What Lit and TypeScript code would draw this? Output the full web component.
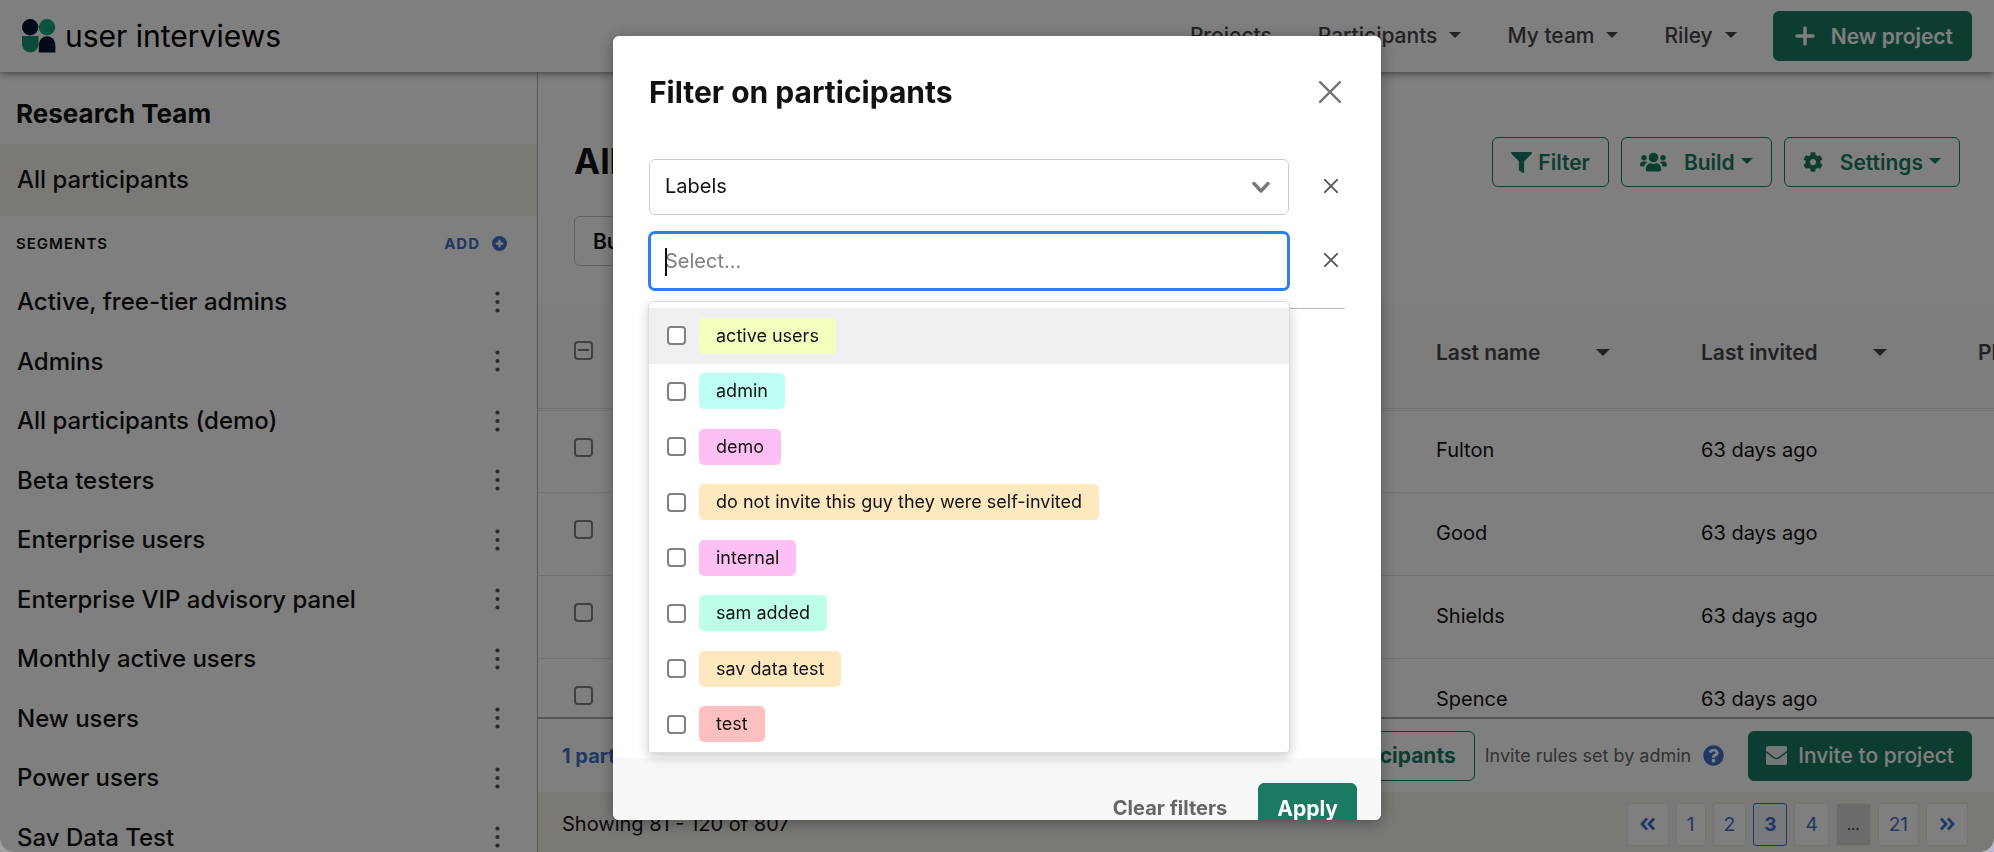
import { LitElement, html, svg, css } from "lit";
import { customElement, property, state } from "lit/decorators.js";
import { classMap } from "lit/directives/class-map.js";

const reset = css`
  *, *::before, *::after { box-sizing: border-box; }
  button, input, select { font: inherit; color: inherit; margin: 0; }
  button { background: none; border: 0; padding: 0; cursor: pointer; }
  a { color: inherit; text-decoration: none; }
  h1, h2, p, ul { margin: 0; padding: 0; }
  ul { list-style: none; }
  svg { display: block; flex: none; }
  .check {
    appearance: none;
    display: block;
    width: 19px;
    height: 19px;
    border: 2px solid #808080;
    border-radius: 4px;
    background: #fff;
  }
  .btn {
    display: flex;
    align-items: center;
    height: 50px;
    border: 1px solid var(--green);
    border-radius: 6px;
    color: var(--green);
    font-weight: 600;
    white-space: nowrap;
  }
  .btn.solid { background: var(--green); color: #fff; }
`;

const caret = (w = 12) => svg`<svg width=${w} height=${w / 2} viewBox="0 0 12 6" fill="currentColor"><path d="M0 0h12L6 6z"/></svg>`;
const cross = (s: number, w: number) => svg`<svg width=${s} height=${s} viewBox="0 0 20 20" fill="none" stroke="currentColor" stroke-width=${w} stroke-linecap="round"><path d="M1 1l18 18M19 1L1 19"/></svg>`;
const plus = svg`<svg width="20" height="20" viewBox="0 0 20 20" fill="none" stroke="currentColor" stroke-width="3.4" stroke-linecap="round"><path d="M10 2v16M2 10h16"/></svg>`;
const plusCircle = svg`<svg width="15" height="15" viewBox="0 0 16 16"><circle cx="8" cy="8" r="8" fill="currentColor"/><path d="M8 4v8M4 8h8" stroke="#fff" stroke-width="2.4"/></svg>`;
const funnel = svg`<svg width="21" height="21" viewBox="0 0 512 512" fill="currentColor"><path d="M488 0H24C3 0-8 26 7 41l185 185v206c0 8 4 15 10 20l80 56c16 11 38 0 38-20V226L505 41c15-15 4-41-17-41z"/></svg>`;
const people = svg`<svg width="27" height="21" viewBox="0 0 27 21" fill="currentColor"><circle cx="13.500" cy="5.500" r="4.800"/><circle cx="4" cy="5.800" r="2.700"/><circle cx="23" cy="5.800" r="2.700"/><path d="M5.800 17.500c0-4 2-6.300 5-6.300 1 .5 1.800.7 2.700.7s1.700-.2 2.700-.7c3 0 5 2.300 5 6.300 0 1.300-.8 2-2 2H7.800c-1.200 0-2-.7-2-2zM0 13.200C0 11 1.200 9.500 3 9.500h2.300c.9 0 1.500.3 2 .8-1.700 1-2.700 2.400-3 4.200H1.200c-.8 0-1.200-.4-1.200-1.300zM27 13.200c0-2.200-1.200-3.700-3-3.700h-2.300c-.9 0-1.500.3-2 .8 1.700 1 2.700 2.400 3 4.200h3.100c.8 0 1.200-.4 1.200-1.300z"/></svg>`;
const gear = svg`<svg width="20" height="20" viewBox="0 0 512 512" fill="currentColor"><path d="M487.400 315.700l-42.600-24.600c4.300-23.200 4.300-47 0-70.200l42.600-24.600c4.900-2.800 7.100-8.600 5.500-14-11.100-35.600-30-67.800-54.700-94.600-3.800-4.100-10-5.100-14.800-2.300L380.800 110c-17.900-15.400-38.500-27.300-60.800-35.100V25.800c0-5.600-3.900-10.500-9.400-11.700-36.700-8.200-74.300-7.800-109.200 0-5.500 1.200-9.400 6.100-9.400 11.700V75c-22.200 7.900-42.800 19.800-60.800 35.100L88.700 85.500c-4.900-2.800-11-1.900-14.800 2.300-24.700 26.700-43.600 58.900-54.700 94.600-1.700 5.400.6 11.200 5.500 14L67.300 221c-4.300 23.200-4.300 47 0 70.200l-42.600 24.600c-4.900 2.800-7.100 8.600-5.500 14 11.100 35.600 30 67.800 54.700 94.600 3.800 4.100 10 5.100 14.800 2.300l42.600-24.600c17.900 15.400 38.500 27.300 60.800 35.100v49.200c0 5.600 3.900 10.500 9.400 11.700 36.700 8.200 74.300 7.800 109.200 0 5.500-1.200 9.400-6.100 9.400-11.700v-49.200c22.200-7.900 42.800-19.800 60.800-35.100l42.600 24.600c4.900 2.800 11 1.900 14.800-2.300 24.700-26.700 43.600-58.900 54.700-94.600 1.500-5.500-.7-11.300-5.600-14.100zM256 336c-44.100 0-80-35.900-80-80s35.900-80 80-80 80 35.900 80 80-35.900 80-80 80z"/></svg>`;
const envelope = svg`<svg width="21" height="19" viewBox="0 0 21 19"><rect width="21" height="19" rx="2" fill="currentColor" opacity="0.900"/><path d="M0 5.500c3.500 3 6 4.800 8 6.200 1.800 1.200 3.200 1.200 5 0 2-1.400 4.500-3.200 8-6.200" fill="none" stroke="#1a7a62" stroke-width="1.500"/></svg>`;
const help = svg`<svg width="21" height="21" viewBox="0 0 512 512" fill="currentColor"><path d="M504 256c0 137-111 248-248 248S8 393 8 256 119 8 256 8s248 111 248 248zM262.700 90c-54.500 0-89.300 23-116.500 63.800-3.500 5.300-2.400 12.400 2.700 16.300l34.700 26.300c5.200 3.900 12.600 3 16.700-2.100 17.900-22.700 30.100-35.800 57.300-35.800 20.400 0 45.700 13.100 45.700 33 0 15-12.400 22.700-32.500 34C247.100 238.500 216 254.900 216 296v4c0 6.600 5.400 12 12 12h56c6.600 0 12-5.400 12-12v-1.300c0-28.500 83.200-29.600 83.200-106.700 0-58-60.200-102-116.500-102zM256 338c-25.400 0-46 20.600-46 46s20.600 46 46 46 46-20.600 46-46-20.600-46-46-46z"/></svg>`;
const dots = svg`<svg width="5" height="22" viewBox="0 0 5 22" fill="#555"><circle cx="2.500" cy="2.500" r="2.100"/><circle cx="2.500" cy="11" r="2.100"/><circle cx="2.500" cy="19.500" r="2.100"/></svg>`;
const logo = svg`<svg width="34" height="34" viewBox="0 0 34 34"><circle cx="8.200" cy="8.200" r="8.200" fill="#04122f"/><circle cx="25" cy="8.200" r="8.200" fill="#16a67c"/><path d="M0 17h16.500v8.200a8.250 8.250 0 0 1-16.500 0z" fill="#149570"/><path d="M16.800 33.500v-8a8.300 8.300 0 0 1 16.600 0v8z" fill="#04122f"/></svg>`;
const angles = (flip: boolean) => svg`<svg width="16" height="14" viewBox="0 0 16 14" fill="none" stroke="currentColor" stroke-width="2.800"><path d=${flip ? "M2 1.500L7 7l-5 5.500M9 1.500L14 7l-5 5.500" : "M7 1.500L2 7l5 5.500M14 1.500L9 7l5 5.500"}/></svg>`;

@customElement("site-header")
class SiteHeader extends LitElement {
  static styles = [reset, css`
    :host {
      display: flex;
      align-items: center;
      height: 72px;
      padding: 0 22px;
      position: relative;
      z-index: 1;
      background: #fff;
      box-shadow: 0 1px 8px rgba(0, 0, 0, 0.55);
    }
    .brand { display: flex; align-items: center; gap: 9px; font-size: 30px; color: #000; }
    nav { display: flex; align-items: center; gap: 46px; margin-left: auto; padding-bottom: 2px; color: #444; font-size: 21px; font-weight: 500; }
    nav a { display: flex; align-items: center; gap: 12px; }
    .btn { gap: 16px; padding: 0 18px 0 21px; margin-left: 36px; font-size: 21px; }
  `];
  render() {
    return html`
      <a class="brand" href="#">${logo}<span>user interviews</span></a>
      <nav>
        <a href="#">Projects</a>
        ${["Participants", "My team", "Riley"].map((t) => html`<a href="#">${t}${caret()}</a>`)}
      </nav>
      <button class="btn solid">${plus}New project</button>
    `;
  }
}

@customElement("segment-sidebar")
class SegmentSidebar extends LitElement {
  static styles = [reset, css`
    :host { display: block; border-right: 1px solid #b0b0b0; overflow: hidden; color: #111; }
    h2 { height: 72px; line-height: 84px; padding: 0 16px; font-size: 26px; font-weight: 700; }
    .all { display: flex; align-items: center; height: 72px; padding: 0 17px 2px; background: #f5f2ec; font-size: 24px; font-weight: 500; }
    .head { display: flex; align-items: center; justify-content: space-between; height: 56px; padding: 0 30px 2px 16px; font-size: 15px; font-weight: 600; letter-spacing: 1px; }
    .add { display: flex; align-items: center; gap: 12px; color: var(--blue); letter-spacing: 1px; font-weight: 700; }
    ul { display: grid; grid-auto-rows: 1fr; height: 595px; font-size: 24px; font-weight: 500; }
    li { display: flex; align-items: center; justify-content: space-between; padding: 0 37px 0 17px; }
  `];
  render() {
    const items = ["Active, free-tier admins", "Admins", "All participants (demo)", "Beta testers", "Enterprise users",
      "Enterprise VIP advisory panel", "Monthly active users", "New users", "Power users", "Sav Data Test"];
    return html`
      <h2>Research Team</h2>
      <a class="all" href="#">All participants</a>
      <div class="head"><span>SEGMENTS</span><button class="add">ADD ${plusCircle}</button></div>
      <ul>${items.map((t) => html`<li><a href="#">${t}</a><button aria-label="Segment options">${dots}</button></li>`)}</ul>
    `;
  }
}

@customElement("participants-view")
class ParticipantsView extends LitElement {
  static styles = [reset, css`
    :host { display: flex; flex-direction: column; min-width: 0; overflow: hidden; color: #111; font-size: 20px; }
    .top { display: flex; align-items: center; justify-content: space-between; padding: 65px 34px 29px 36px; }
    h1 { font-size: 35px; line-height: 48px; padding-bottom: 2px; font-weight: 700; }
    .actions { display: flex; gap: 12px; }
    .actions .btn { padding: 0 18px; font-size: 21px; }
    .actions .filter { gap: 6px; }
    .menu svg:last-child { margin: 0 0 3px 6px; }
    .menu svg:first-child { margin-right: 17px; }
    .bulk { padding: 0 0 37px 36px; }
    .bulk button { border: 1px solid #c4c4c4; border-radius: 6px; height: 50px; padding: 0 18px; font-size: 21px; font-weight: 600; }
    .grid { flex: 1; min-height: 0; overflow: hidden; }
    table { width: calc(100% + 240px); table-layout: fixed; border-collapse: collapse; }
    .c-check { width: 76px; }
    .c-last { width: 265px; }
    .c-invited { width: 277px; }
    .c-phone { width: 276px; }
    th { height: 106px; padding: 0 71px 6px 20px; background: #fafafa; text-align: left; font-size: 21px; font-weight: 600; color: #444; border-bottom: 3px double #e2e2e2; white-space: nowrap; }
    th:first-child { padding: 0 0 10px 36px; }
    td:first-child { padding: 0 0 8px 36px; }
    th div { display: flex; align-items: center; justify-content: space-between; }
    td { height: 83px; padding: 0 20px 2px; border-bottom: 1px solid #e2e2e2; }
    .some { display: grid; place-items: center; }
    .some::after { content: ""; width: 11px; height: 2px; background: #777; }
    .bar { display: flex; align-items: center; height: 75px; padding: 0 22px 0 24px; border-top: 2px solid #aaa; background: #fff; }
    .bar strong { margin-right: auto; color: var(--blue); font-weight: 700; }
    .bar .btn { padding: 0 18px; }
    .bar .add { font-weight: 700; font-size: 21px; }
    .bar .note { margin: 0 12px 0 10px; font-size: 18px; color: #666; }
    .help { color: var(--blue); margin-right: 24px; }
    .bar .invite { gap: 11px; padding: 0 17px; font-size: 21px; font-weight: 500; }
    .foot { display: flex; align-items: center; justify-content: space-between; height: 60px; padding: 4px 26px 0 24px; background: #f5f2ec; }
    .pages { display: flex; gap: 7px; font-size: 19px; }
    .pages > * { display: grid; place-items: center; min-width: 30px; height: 43px; padding: 0 10px; border: 1px solid #ece8e0; border-radius: 3px; background: #fff; color: var(--blue); }
    .pages .edge { padding: 0 12px; }
    .pages .on { border: 1px solid var(--blue); background: #eef3fb; font-weight: 700; }
    .pages .gap { background: #d6d6d6; color: #333; font-size: 15px; }
  `];
  render() {
    return html`
      <div class="top">
        <h1>All participants</h1>
        <div class="actions">
          <button class="btn filter">${funnel}Filter</button>
          <button class="btn menu">${people}Build${caret()}</button>
          <button class="btn menu">${gear}Settings${caret()}</button>
        </div>
      </div>
      <div class="bulk"><button>Bulk edit</button></div>
      <div class="grid">
        <table>
          <colgroup><col class="c-check"><col><col class="c-last"><col class="c-invited"><col class="c-phone"></colgroup>
          <thead><tr>
            <th><button class="check some" aria-label="Toggle all rows"></button></th>
            <th></th>
            <th><div>Last name ${caret(14)}</div></th>
            <th><div>Last invited ${caret(14)}</div></th>
            <th>Phone</th>
          </tr></thead>
          <tbody>
            ${["Fulton", "Good", "Shields", "Spence"].map((n) => html`<tr>
              <td><input class="check" type="checkbox" aria-label=${n}></td><td></td><td>${n}</td><td>63 days ago</td><td></td>
            </tr>`)}
          </tbody>
        </table>
      </div>
      <div class="bar">
        <strong>1 participant</strong>
        <button class="btn add">Add participants</button>
        <span class="note">Invite rules set by admin</span>
        <button class="help" aria-label="Help">${help}</button>
        <button class="btn solid invite">${envelope}Invite to project</button>
      </div>
      <div class="foot">
        <span>Showing 81 - 120 of 807</span>
        <div class="pages">
          <button class="edge" aria-label="First">${angles(false)}</button>
          ${["1", "2", "3", "4"].map((p) => html`<button class=${classMap({ on: p === "3" })}>${p}</button>`)}
          <span class="gap">...</span>
          <button>21</button>
          <button class="edge" aria-label="Last">${angles(true)}</button>
        </div>
      </div>
    `;
  }
}

@customElement("label-menu")
class LabelMenu extends LitElement {
  @property({ attribute: false }) options: { name: string; tint: string }[] = [];
  @state() private active = 0;
  static styles = [reset, css`
    :host { display: block; padding-top: 6px; background: #fff; border: 1px solid #ddd; border-radius: 6px 6px 4px 4px; box-shadow: 0 4px 12px rgba(0, 0, 0, 0.2); font-size: 18px; color: #111; }
    ul { display: grid; grid-auto-rows: 1fr; height: 444px; }
    label { display: flex; align-items: center; gap: 13px; height: 100%; padding-left: 18px; }
    .active { background: #f0f0f0; }
    .tag { padding: 0 17px; line-height: 36px; border-radius: 5px; }
    .yellow { background: #f2ffbd; }
    .aqua { background: #bdfff4; }
    .pink { background: #fcc0f4; }
    .sand { background: #fde8c0; }
    .mint { background: #bdffe8; }
    .rose { background: #fdbfbf; }
  `];
  render() {
    return html`<ul>${this.options.map((o, i) => html`
      <li class=${classMap({ active: i === this.active })} @mouseenter=${() => (this.active = i)}>
        <label><input class="check" type="checkbox"><span class="tag ${o.tint}">${o.name}</span></label>
      </li>`)}</ul>`;
  }
}

@customElement("filter-dialog")
class FilterDialog extends LitElement {
  static styles = [reset, css`
    :host { display: block; width: 768px; max-width: 100%; height: calc(100vh - 68px); margin: 36px auto 32px; border-radius: 6px; background: #fff; overflow: hidden; box-shadow: 0 3px 16px rgba(0, 0, 0, 0.35); color: #111; font-size: 20px; }
    header { display: flex; align-items: center; justify-content: space-between; height: 112px; padding: 0 40px 0 36px; }
    h2 { font-size: 30px; font-weight: 700; }
    header button { color: #777; }
    .body { padding: 11px 36px 0; min-height: 610px; }
    .fields { display: grid; gap: 17px; padding-bottom: 18px; border-bottom: 1px solid #bbb; }
    .row { display: grid; grid-template-columns: 1fr 56px; align-items: center; }
    .box { position: relative; }
    select, input { display: block; width: 100%; appearance: none; outline: 0; background: #fff; border-radius: 6px; }
    select { height: 56px; padding: 0 15px 2px; border: 1px solid #ccc; }
    input { height: 58px; padding: 0 14px; border: 2px solid #2a80ec; box-shadow: 0 0 0 1px #2a80ec; }
    input::placeholder { color: #808080; opacity: 1; }
    .arrow { position: absolute; right: 19px; top: 22px; color: #777; pointer-events: none; }
    .cursor { position: absolute; left: 16px; top: 16px; width: 2px; height: 28px; background: #111; }
    .drop { display: grid; justify-content: center; padding-left: 28px; padding-bottom: 2px; color: #555; }
    label-menu { position: absolute; left: -1px; right: -1px; top: 69px; }
    footer { display: flex; align-items: center; justify-content: flex-end; gap: 31px; padding: 25px 24px; background: #f8f8f8; font-weight: 700; }
    footer .clear { color: #666; }
    .btn { padding: 0 18px; font-size: 21px; font-weight: 700; }
  `];
  private options = [
    { name: "active users", tint: "yellow" },
    { name: "admin", tint: "aqua" },
    { name: "demo", tint: "pink" },
    { name: "do not invite this guy they were self-invited", tint: "sand" },
    { name: "internal", tint: "pink" },
    { name: "sam added", tint: "mint" },
    { name: "sav data test", tint: "sand" },
    { name: "test", tint: "rose" },
  ];
  render() {
    return html`
      <header><h2>Filter on participants</h2><button aria-label="Close">${cross(22, 2.2)}</button></header>
      <div class="body">
        <div class="fields">
          <div class="row">
            <div class="box">
              <select aria-label="Filter by"><option>Labels</option></select>
              <svg class="arrow" width="18" height="13" viewBox="0 0 18 13" fill="none" stroke="currentColor" stroke-width="3.400" stroke-linecap="round" stroke-linejoin="round"><path d="M2 2.500l7 7.500 7-7.500"/></svg>
            </div>
            <button class="drop" aria-label="Remove field">${cross(14, 2.6)}</button>
          </div>
          <div class="row">
            <div class="box">
              <input type="text" placeholder="Select..." aria-label="Labels">
              <span class="cursor"></span>
              <label-menu .options=${this.options}></label-menu>
            </div>
            <button class="drop" aria-label="Remove value">${cross(14, 2.6)}</button>
          </div>
        </div>
      </div>
      <footer><button class="clear">Clear filters</button><button class="btn solid">Apply</button></footer>
    `;
  }
}

@customElement("app-root")
class AppRoot extends LitElement {
  static styles = [reset, css`
    :host {
      --green: #1a7a62;
      --blue: #4270c8;
      display: block;
      height: 100vh;
      font-family: Inter, "Open Sans", sans-serif;
      background: linear-gradient(to right, #a0a0a0, #b9b5d2);
    }
    .page { display: flex; flex-direction: column; height: 100vh; background: #fff; border-radius: 0 0 14px 14px; overflow: hidden; }
    .cols { flex: 1; min-height: 0; display: grid; grid-template-columns: 538px minmax(0, 1fr); }
    .shade { position: fixed; inset: 0; z-index: 5; background: rgba(0, 0, 0, 0.5); border-radius: 0 0 14px 14px; display: flow-root; }
  `];
  render() {
    return html`
      <div class="page">
        <site-header></site-header>
        <div class="cols"><segment-sidebar></segment-sidebar><participants-view></participants-view></div>
      </div>
      <div class="shade"><filter-dialog></filter-dialog></div>
    `;
  }
}
